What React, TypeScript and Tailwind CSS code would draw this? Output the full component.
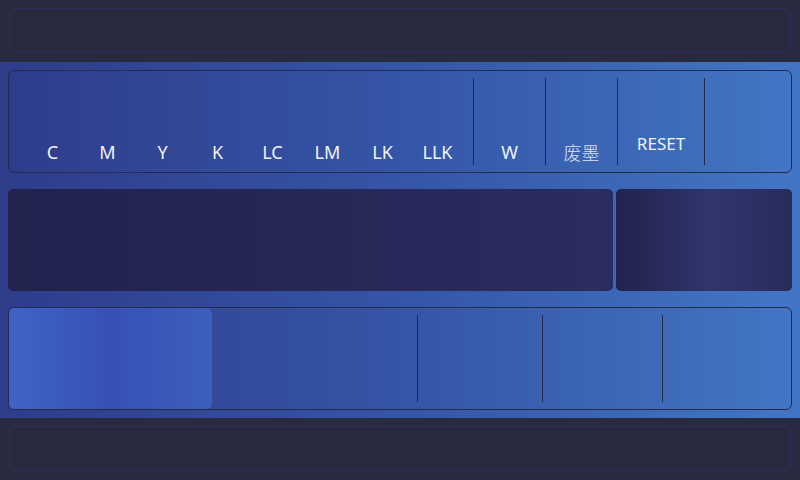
const inks = ["C", "M", "Y", "K", "LC", "LM", "LK", "LLK"];

function Divider() {
  return <div className="w-px self-stretch bg-[#252947]" />;
}

export default function App() {
  return (
    <div className="w-[800px] h-[480px] flex flex-col bg-[#282a3f] font-['Noto_Sans','Noto_Sans_CJK_SC',sans-serif] text-[#f1f3fb]">
      {/* header */}
      <div className="h-[62px] px-[9px] pt-[8px] pb-[9px]">
        <div className="h-full rounded-[5px] border border-[#302f5c]" />
      </div>

      {/* main */}
      <div className="h-[356px] flex flex-col gap-4 px-2 pt-2 bg-gradient-to-r from-[#2e3c8a] via-[#3555a6] to-[#4276c4]">
        {/* ink buttons */}
        <div className="h-[103px] flex rounded-[6px] border border-[#272b4b] py-[7px] pl-[16px]">
          {inks.map((ink) => (
            <div key={ink} className="w-[55px] flex items-end justify-center pb-[3px] text-[18px] leading-[20px]">
              {ink}
            </div>
          ))}
          <div className="w-[8px]" />
          <Divider />
          <div className="w-[71px] flex items-end justify-center pb-[3px] text-[18px] leading-[20px]">W</div>
          <Divider />
          <div className="w-[71px] flex items-end justify-center pb-[3px] text-[18px] leading-[20px] font-light text-[#dde3f3] font-['Noto_Sans_CJK_SC',sans-serif]">
            废墨
          </div>
          <Divider />
          <div className="w-[86px] flex items-end justify-center pb-[11px] text-[17px] leading-[20px]">RESET</div>
          <Divider />
          <div className="flex-1" />
        </div>

        {/* display */}
        <div className="h-[102px] flex gap-[3px]">
          <div className="w-[605px] rounded-[5px] bg-gradient-to-r from-[#22224f] to-[#2b2c5f]" />
          <div className="flex-1 rounded-[5px] bg-gradient-to-r from-[#22224e] via-[#30356c] via-55% to-[#282b5c]" />
        </div>

        {/* mode selector */}
        <div className="h-[103px] flex rounded-[6px] border border-[#272b4b]">
          <div className="w-[203px] rounded-[5px] bg-gradient-to-r from-[#3e64c8] via-[#3651b6] to-[#3c5fbd]" />
          <div className="w-[205px]" />
          <div className="w-px my-[7px] bg-[#252947]" />
          <div className="w-[124px]" />
          <div className="w-px my-[7px] bg-[#252947]" />
          <div className="w-[119px]" />
          <div className="w-px my-[7px] bg-[#252947]" />
          <div className="flex-1" />
        </div>
      </div>

      {/* footer */}
      <div className="h-[62px] px-[9px] pt-[8px] pb-[9px]">
        <div className="h-full rounded-[5px] border border-[#302f5c]" />
      </div>
    </div>
  );
}
